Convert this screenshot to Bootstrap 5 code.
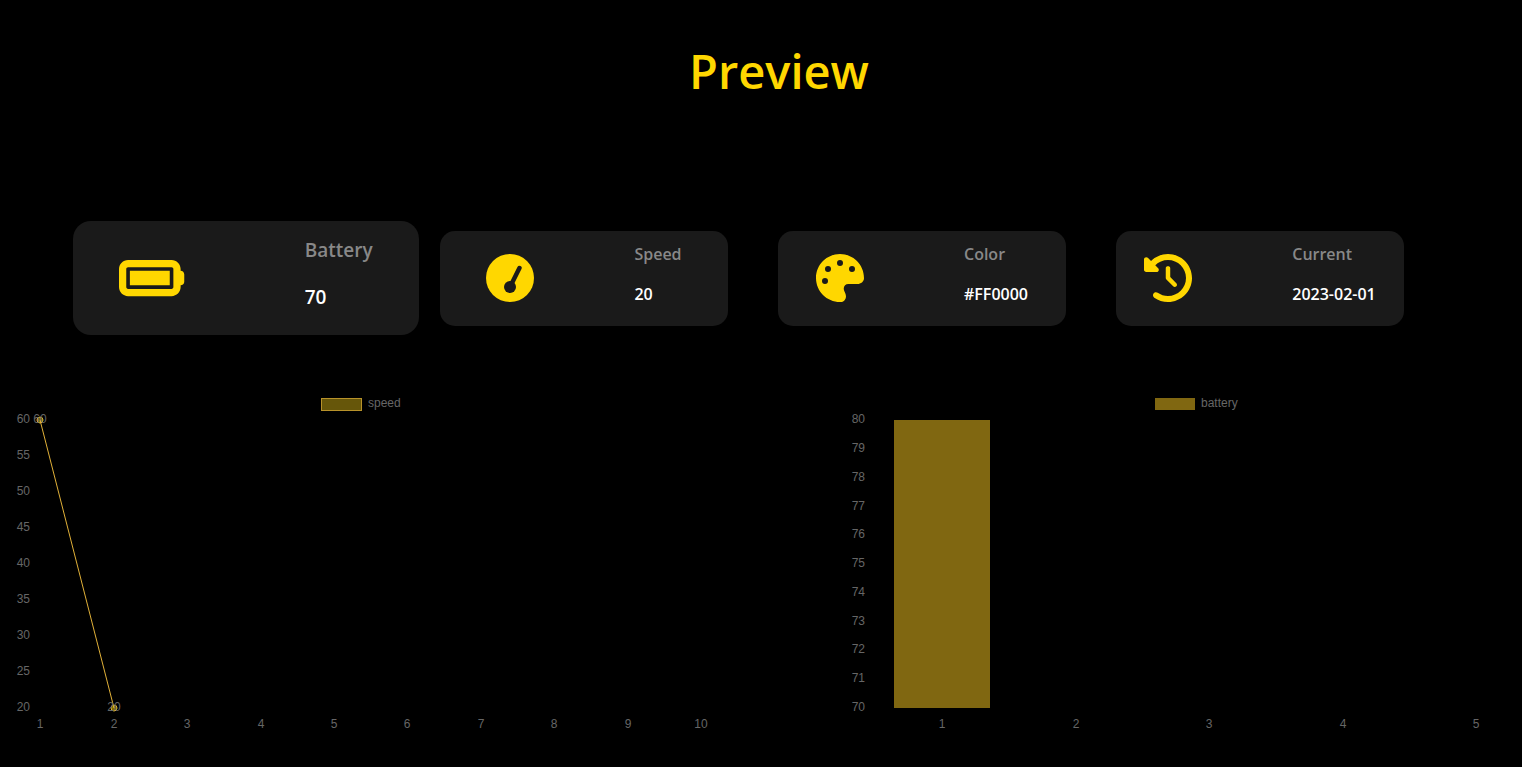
<!DOCTYPE html>
<html lang="en">
<head>
<meta charset="utf-8">
<meta name="viewport" content="width=device-width, initial-scale=1">
<title>Preview</title>
<link href="https://cdn.jsdelivr.net/npm/bootstrap@5.3.0/dist/css/bootstrap.min.css" rel="stylesheet">
<style>
  body { background: #000; font-family: "Open Sans", sans-serif; }
  .page-title { color: gold; font-size: 47px; line-height: 56px; font-weight: 600; padding: 43px 0 0 36px; }
  .stats { height: 114px; margin-top: 122px; gap: 50px; padding-right: 16px; }
  .stat { flex: 0 1 288px; height: 95px; gap: 100px; border-radius: 15px; background: #1a1a1a; font-size: 16px; line-height: 20px; }
  .stat svg { height: 48px; fill: gold; }
  .stat-text { padding-bottom: 8px; }
  .stat h2 { color: #888; font-size: inherit; line-height: inherit; font-weight: 600; margin-bottom: 20px; }
  .stat p { color: #fff; font-weight: 600; }
  .stat-active { flex-basis: 346px; height: 114px; margin: 0 -29px; gap: 120px; border-radius: 18px; font-size: 19px; line-height: 24px; }
  .stat-active svg { height: 58px; }
  .stat-active .stat-text { padding-bottom: 10px; }
  .stat-active h2 { margin-bottom: 23px; }
  .charts { margin-top: 55px; }
  .chart { width: 100%; font-family: "Liberation Sans", sans-serif; font-size: 12px; fill: #666; }
</style>
</head>
<body>
<h1 class="page-title text-center mb-0">Preview</h1>

<main>
  <section class="stats d-flex justify-content-center align-items-center">
    <article class="stat stat-active d-flex justify-content-center align-items-center">
      <svg viewBox="0 0 576 512" aria-hidden="true"><path d="M464 160c8.800 0 16 7.200 16 16V336c0 8.800-7.200 16-16 16H80c-8.800 0-16-7.200-16-16V176c0-8.800 7.200-16 16-16H464zM80 96C35.800 96 0 131.800 0 176V336c0 44.200 35.800 80 80 80H464c44.200 0 80-35.800 80-80V320c17.700 0 32-14.300 32-32V224c0-17.700-14.300-32-32-32V176c0-44.200-35.800-80-80-80H80zm368 96H96V320H448V192z"/></svg>
      <div class="stat-text"><h2>Battery</h2><p class="mb-0">70</p></div>
    </article>
    <article class="stat d-flex justify-content-center align-items-center">
      <svg viewBox="0 0 512 512" aria-hidden="true"><circle cx="256" cy="256" r="256"/><circle cx="256" cy="352" r="64" fill="#1a1a1a"/><path d="M256 352L357 150" stroke="#1a1a1a" stroke-width="48" stroke-linecap="round"/></svg>
      <div class="stat-text"><h2>Speed</h2><p class="mb-0">20</p></div>
    </article>
    <article class="stat d-flex justify-content-center align-items-center">
      <svg viewBox="0 0 512 512" aria-hidden="true"><path d="M512 256c0 .9 0 1.800 0 2.700c-.4 36.500-33.600 61.300-70.100 61.300H344c-26.500 0-48 21.500-48 48c0 3.400 .4 6.700 1 9.900c2.100 10.200 6.500 20 10.800 29.900c6.100 13.800 12.100 27.500 12.100 42c0 31.800-21.600 60.700-53.400 62c-3.500 .1-7 .2-10.600 .2C114.600 512 0 397.400 0 256S114.600 0 256 0S512 114.600 512 256zM128 288a32 32 0 1 0 -64 0 32 32 0 1 0 64 0zm0-96a32 32 0 1 0 0-64 32 32 0 1 0 0 64zM288 96a32 32 0 1 0 -64 0 32 32 0 1 0 64 0zm96 96a32 32 0 1 0 0-64 32 32 0 1 0 0 64z"/></svg>
      <div class="stat-text"><h2>Color</h2><p class="mb-0">#FF0000</p></div>
    </article>
    <article class="stat d-flex justify-content-center align-items-center">
      <svg viewBox="0 0 512 512" aria-hidden="true"><path d="M75 75L41 41C25.900 25.900 0 36.600 0 57.900V168c0 13.300 10.700 24 24 24H134.100c21.400 0 32.100-25.900 17-41l-30.800-30.800C155 85.500 203 64 256 64c106 0 192 86 192 192s-86 192-192 192c-40.800 0-78.600-12.700-109.700-34.400c-14.500-10.100-34.400-6.600-44.600 7.900s-6.600 34.400 7.900 44.600C151.200 495 201.700 512 256 512c141.400 0 256-114.600 256-256S397.400 0 256 0C185.300 0 121.300 28.700 75 75zm181 53c-13.300 0-24 10.700-24 24V256c0 6.400 2.500 12.500 7 17l72 72c9.400 9.400 24.600 9.400 33.900 0s9.400-24.600 0-33.900l-65-65V152c0-13.300-10.700-24-24-24z"/></svg>
      <div class="stat-text"><h2>Current</h2><p class="mb-0">2023-02-01</p></div>
    </article>
  </section>

  <section class="charts row g-0">
    <div class="col-6">
      <svg class="chart d-block" viewBox="0 0 761 350" role="img" aria-label="Speed line chart">
        <rect x="321.500" y="8.500" width="40" height="12" fill="#66560a" stroke="#b8922a"/>
        <text x="368" y="17">speed</text>
        <g text-anchor="end">
          <text x="30" y="33">60</text><text x="30" y="69">55</text><text x="30" y="105">50</text>
          <text x="30" y="141">45</text><text x="30" y="177">40</text><text x="30" y="213">35</text>
          <text x="30" y="249">30</text><text x="30" y="285">25</text><text x="30" y="321">20</text>
        </g>
        <g text-anchor="middle">
          <text x="40" y="338">1</text><text x="114" y="338">2</text><text x="187" y="338">3</text>
          <text x="261" y="338">4</text><text x="334" y="338">5</text><text x="407" y="338">6</text>
          <text x="481" y="338">7</text><text x="554" y="338">8</text><text x="628" y="338">9</text>
          <text x="701" y="338">10</text>
        </g>
        <g stroke="#e0b038" fill="#ffd700" fill-opacity=".5">
          <path d="M40 30L114 318" fill="none"/>
          <circle cx="40" cy="30" r="3"/><circle cx="114" cy="318" r="3"/>
        </g>
        <g text-anchor="middle"><text x="40" y="33">60</text><text x="114" y="321">20</text></g>
      </svg>
    </div>
    <div class="col-6">
      <svg class="chart d-block" viewBox="0 0 761 350" role="img" aria-label="Battery bar chart">
        <rect x="394" y="8" width="40" height="12" fill="#806711"/>
        <text x="440" y="17">battery</text>
        <g text-anchor="end">
          <text x="104" y="33">80</text><text x="104" y="62">79</text><text x="104" y="91">78</text>
          <text x="104" y="120">77</text><text x="104" y="148">76</text><text x="104" y="177">75</text>
          <text x="104" y="206">74</text><text x="104" y="235">73</text><text x="104" y="263">72</text>
          <text x="104" y="292">71</text><text x="104" y="321">70</text>
        </g>
        <rect x="133" y="30" width="96" height="288" fill="#806711"/>
        <g text-anchor="middle">
          <text x="181" y="338">1</text><text x="315" y="338">2</text><text x="448" y="338">3</text>
          <text x="582" y="338">4</text><text x="715" y="338">5</text>
        </g>
      </svg>
    </div>
  </section>
</main>
<script src="https://cdn.jsdelivr.net/npm/bootstrap@5.3.0/dist/js/bootstrap.bundle.min.js"></script>
</body>
</html>
